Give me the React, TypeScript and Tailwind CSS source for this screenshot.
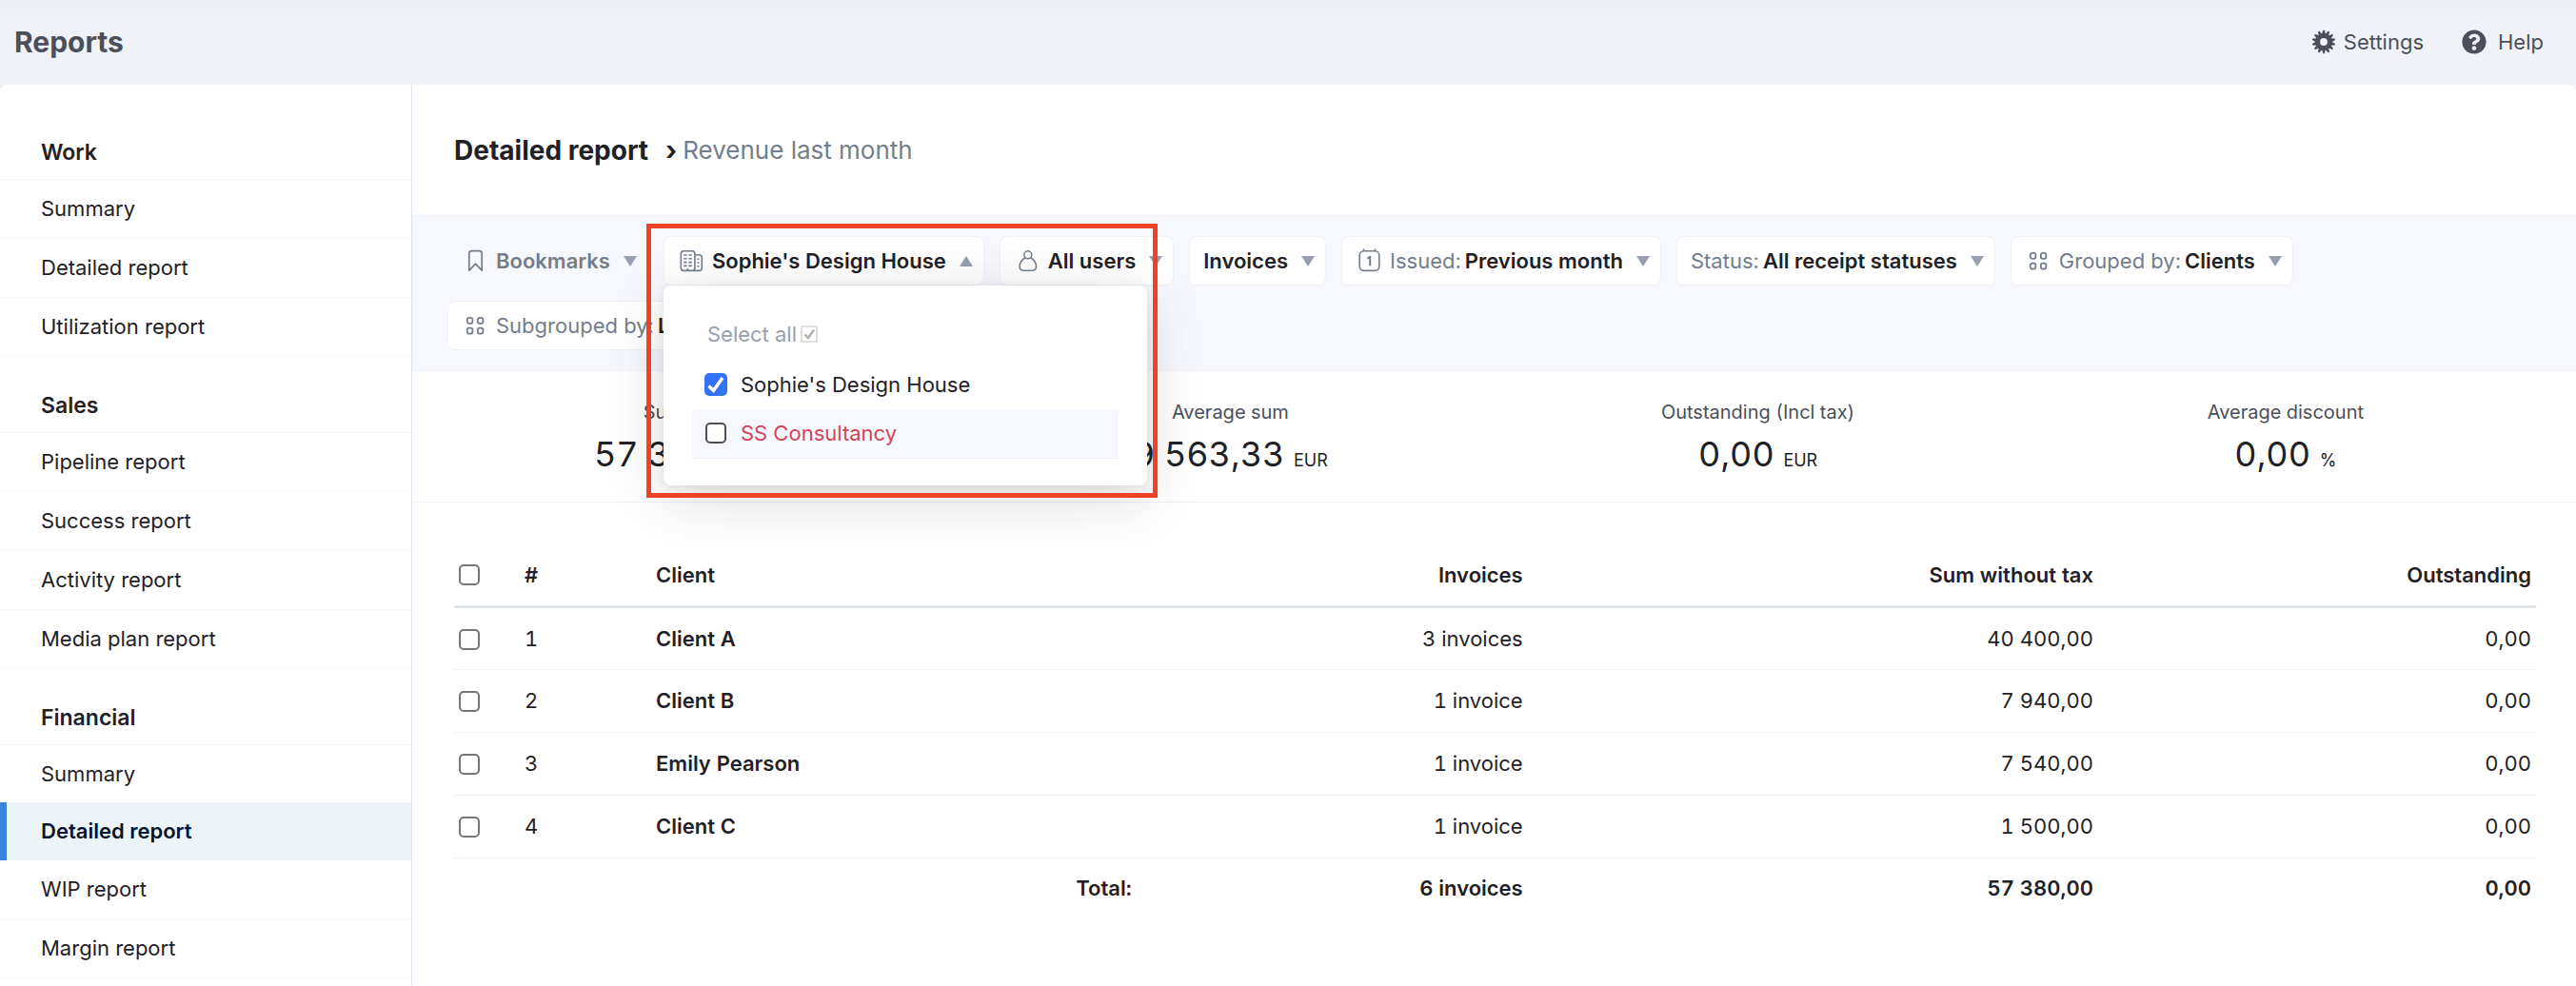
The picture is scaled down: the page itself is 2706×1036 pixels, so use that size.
import React, { useState } from 'react';
import { FaQuestionCircle } from 'react-icons/fa';

type NavGroup = { title: string; items: string[] };

const NAV: NavGroup[] = [
  { title: 'Work', items: ['Summary', 'Detailed report', 'Utilization report'] },
  { title: 'Sales', items: ['Pipeline report', 'Success report', 'Activity report', 'Media plan report'] },
  { title: 'Financial', items: ['Summary', 'Detailed report', 'WIP report', 'Margin report'] },
];

const STATS = [
  { label: 'Sum (ex. tax)', value: '57 380,00', unit: 'EUR' },
  { label: 'Average sum', value: '9 563,33', unit: 'EUR' },
  { label: 'Outstanding (Incl tax)', value: '0,00', unit: 'EUR' },
  { label: 'Average discount', value: '0,00', unit: '%' },
];

const ROWS = [
  { client: 'Client A', invoices: '3 invoices', sum: '40 400,00', outstanding: '0,00' },
  { client: 'Client B', invoices: '1 invoice', sum: '7 940,00', outstanding: '0,00' },
  { client: 'Emily Pearson', invoices: '1 invoice', sum: '7 540,00', outstanding: '0,00' },
  { client: 'Client C', invoices: '1 invoice', sum: '1 500,00', outstanding: '0,00' },
];

const CHECKBOX =
  'block size-[22px] shrink-0 appearance-none rounded-[5px] border-2 border-[#767676] bg-white checked:border-[#3273f6] checked:bg-[#3273f6]';

function GearIcon() {
  const teeth = Array.from({ length: 14 }, (_, i) => (i * 360) / 14);
  return (
    <svg viewBox="0 0 26 26" className="size-[26px]" fill="#4a4f5a" aria-hidden="true">
      {teeth.map((deg) => (
        <path key={deg} d="M10.9 5.5 12.1 1.2Q13 -.1 13.9 1.2L15.1 5.5Z" transform={`rotate(${deg} 13 13)`} />
      ))}
      <path
        fillRule="evenodd"
        d="M13 4.4a8.6 8.6 0 1 0 0 17.2 8.6 8.6 0 0 0 0-17.2Zm0 4.7a3.9 3.9 0 1 1 0 7.8 3.9 3.9 0 0 1 0-7.8Z"
      />
    </svg>
  );
}

function BookmarkIcon() {
  return (
    <svg viewBox="0 0 28 28" className="size-7" fill="none" stroke="#747d8c" strokeWidth="1.7" aria-hidden="true">
      <path d="M7.8 24.2V6.4a2.8 2.8 0 0 1 2.8-2.8h7.8a2.8 2.8 0 0 1 2.8 2.8v17.8l-6.7-7z" strokeLinejoin="round" />
    </svg>
  );
}

function BuildingIcon() {
  return (
    <svg viewBox="0 0 28 28" className="size-7" fill="none" stroke="#747d8c" strokeWidth="1.6" aria-hidden="true">
      <rect x="3.3" y="3.8" width="14.6" height="20.6" rx="2.8" />
      <path d="M18 7.8h4.6a2.7 2.7 0 0 1 2.7 2.7v11.2a2.7 2.7 0 0 1-2.7 2.7h-6.2" />
      <path d="M6.2 8h3.4M11.4 8h3.4M6.2 11.8h3.4M11.4 11.8h3.4M6.2 15.6h3.4M11.4 15.6h3.4M6.2 19.4h3.4M11.4 19.4h3.4" />
      <path d="M10.5 22v2M20.4 12.2h2M20.4 16h2M20.4 19.8h2" />
    </svg>
  );
}

function UserIcon() {
  return (
    <svg viewBox="0 0 28 28" className="size-7" fill="none" stroke="#747d8c" strokeWidth="1.6" aria-hidden="true">
      <circle cx="14.8" cy="7.8" r="4" />
      <path d="M12 10.8c-3.6 2.2-5.9 5.8-5.9 9.2 0 2.9 1.7 4.3 4.3 4.3h8.8c2.6 0 4.3-1.4 4.3-4.3 0-3.4-2.3-7-5.9-9.2" />
    </svg>
  );
}

function CalendarIcon() {
  return (
    <svg viewBox="0 0 28 28" className="size-7" fill="none" stroke="#747d8c" strokeWidth="1.6" aria-hidden="true">
      <rect x="4.2" y="3.8" width="20.6" height="20.6" rx="4.5" />
      <path d="M8.5 1.5v2.3M20.5 1.5v2.3" />
      <path d="M12.4 11.7l2.8-2v9.5" strokeWidth="2" strokeLinejoin="round" />
    </svg>
  );
}

function GroupIcon() {
  return (
    <svg viewBox="0 0 28 28" className="size-7" fill="none" stroke="#747d8c" strokeWidth="1.8" aria-hidden="true">
      <rect x="5.8" y="5.8" width="5.6" height="6" rx="2" />
      <rect x="16.8" y="5.8" width="5.6" height="6" rx="2" />
      <rect x="5.8" y="16.6" width="5.6" height="6" rx="2" />
      <rect x="16.8" y="16.6" width="5.6" height="6" rx="2" />
    </svg>
  );
}

type FilterProps = {
  icon?: React.ReactNode;
  label?: string;
  value?: string;
  open?: boolean;
  plain?: boolean;
  onClick?: () => void;
};

function Filter({ icon, label, value, open, plain, onClick }: FilterProps) {
  return (
    <button
      type="button"
      aria-expanded={open}
      onClick={onClick}
      className={`flex h-[52px] items-center whitespace-nowrap rounded-lg border pl-3.5 pr-[11px] text-[22px] leading-7 ${
        plain ? 'border-transparent' : 'border-[#eff1f8] bg-white'
      }`}
    >
      {icon && <span className="mr-2">{icon}</span>}
      {label && <span className={plain ? 'font-semibold text-[#747d8c]' : 'mr-1 text-[#747d8c]'}>{label}</span>}
      {value && <span className="font-semibold text-[#1f2126]">{value}</span>}
      <svg viewBox="0 0 14 11" className="ml-3.5 h-[11px] w-3.5" fill="#98a0af" aria-hidden="true">
        <path d={open ? 'M0 11 7 0l7 11z' : 'M0 0h14L7 11z'} />
      </svg>
    </button>
  );
}

function CheckMark() {
  return (
    <svg
      viewBox="0 0 24 24"
      className="pointer-events-none absolute inset-0 size-6"
      fill="none"
      stroke="#fff"
      strokeWidth="3.4"
      aria-hidden="true"
    >
      <path d="M4.5 13.5 9.5 18.3 19 5" />
    </svg>
  );
}

function CompanyMenu() {
  const [sophie, setSophie] = useState(true);
  const [consultancy, setConsultancy] = useState(false);

  return (
    <div className="absolute left-0 top-full z-10 w-[508px] rounded-lg bg-white px-[30px] pb-7 pt-[34px] text-[22px] leading-7 shadow-[0_12px_60px_rgba(0,0,0,0.16),0_2px_10px_rgba(0,0,0,0.06)]">
      <label className="mb-2.5 ml-4 flex h-[34px] items-center gap-1 text-[#98a0af]">
        Select all
        <span className="relative">
          <input type="checkbox" checked disabled readOnly className="block size-[18px] appearance-none border-2 border-[#dedede] bg-white" />
          <svg viewBox="0 0 18 18" className="absolute inset-0 size-[18px]" fill="none" stroke="#b0b0b0" strokeWidth="2.5" aria-hidden="true">
            <path d="M4.5 9.5 8 13l6-8.5" />
          </svg>
        </span>
      </label>
      <label className="flex h-[52px] items-center gap-3.5 pl-[13px] text-[#1f2126]">
        <span className="relative">
          <input
            type="checkbox"
            checked={sophie}
            onChange={(e) => setSophie(e.target.checked)}
            className="block size-6 appearance-none rounded-[5px] border-2 border-[#4f4f4f] bg-white checked:border-[#3273f6] checked:bg-[#3273f6]"
          />
          {sophie && <CheckMark />}
        </span>
        Sophie's Design House
      </label>
      <label className="flex h-[52px] items-center gap-[15px] border-b border-[#eff1f8] bg-[#f7f8fd] pb-0.5 pl-3.5 text-[#d2455b]">
        <input
          type="checkbox"
          checked={consultancy}
          onChange={(e) => setConsultancy(e.target.checked)}
          className="block size-[22px] appearance-none rounded-[5px] border-2 border-[#4f4f4f] bg-white checked:bg-[#3273f6]"
        />
        SS Consultancy
      </label>
    </div>
  );
}

function Sidebar() {
  return (
    <nav className="w-[433px] shrink-0 border-r border-[#e2e5ef] pt-5">
      {NAV.map((group) => (
        <section key={group.title}>
          <h2 className="flex h-20 items-end border-b border-[#f1f2f6] pb-3.5 pl-[43px] text-[23px] font-semibold leading-7">
            {group.title}
          </h2>
          {group.items.map((item) => {
            const active = group.title === 'Financial' && item === 'Detailed report';
            return (
              <a
                key={item}
                href="#"
                className={`flex items-center pb-0.5 text-[22px] leading-7 ${
                  active
                    ? '-mt-0.5 h-[61px] border-l-[7px] border-[#3b82d9] bg-[#edf4f8] pl-9 font-semibold text-[#04142b]'
                    : 'h-[62px] border-b border-[#f7f8fa] pl-[43px]'
                }`}
              >
                {item}
              </a>
            );
          })}
        </section>
      ))}
    </nav>
  );
}

function ReportTable() {
  return (
    <table className="w-full table-fixed text-[22px] leading-7 tabular-nums">
      <thead>
        <tr className="h-[72px] border-b-[3px] border-[#e2e6ef] text-right">
          <th scope="col" className="w-[69px] px-[5px] pt-2">
            <input type="checkbox" aria-label="Select all rows" className={CHECKBOX} />
          </th>
          <th scope="col" className="w-[138px] px-[5px] pt-2 text-left font-semibold">#</th>
          <th scope="col" className="w-[23.3%] px-[5px] pt-2 text-left font-semibold">Client</th>
          <th scope="col" className="w-[18.8%] px-[5px] pt-2 font-semibold">Invoices</th>
          <th scope="col" className="w-[27.4%] px-[5px] pt-2 font-semibold">Sum without tax</th>
          <th scope="col" className="px-[5px] pt-2 font-semibold">Outstanding</th>
        </tr>
      </thead>
      <tbody>
        {ROWS.map((row, i) => (
          <tr key={row.client} className="h-[66px] border-b border-[#eff1f5] text-right">
            <td className="px-[5px] pt-0.5">
              <input type="checkbox" aria-label={`Select ${row.client}`} className={CHECKBOX} />
            </td>
            <td className="px-[5px] text-left">{i + 1}</td>
            <td className="px-[5px] text-left font-semibold">{row.client}</td>
            <td className="px-[5px]">{row.invoices}</td>
            <td className="px-[5px]">{row.sum}</td>
            <td className="px-[5px]">{row.outstanding}</td>
          </tr>
        ))}
      </tbody>
      <tfoot>
        <tr className="h-16 text-right font-semibold">
          <td colSpan={3} className="px-[5px]">Total:</td>
          <td className="px-[5px]">6 invoices</td>
          <td className="px-[5px]">57 380,00</td>
          <td className="px-[5px]">0,00</td>
        </tr>
      </tfoot>
    </table>
  );
}

export default function App() {
  const [menuOpen, setMenuOpen] = useState(true);

  return (
    <div className="flex min-h-screen flex-col bg-[#f1f2f8] font-['Inter',sans-serif] text-[#1f2126]">
      <header className="flex h-[89px] shrink-0 items-center justify-between bg-linear-to-b from-[#edeef3] to-[#f1f2f8] to-30% pb-0.5 pl-[15px] pr-[34px] text-[#4a4f5a]">
        <h1 className="text-[30px] font-bold leading-9">Reports</h1>
        <div className="flex items-center gap-10 text-[22px] leading-7">
          <button type="button" className="flex items-center gap-2">
            <GearIcon />
            Settings
          </button>
          <button type="button" className="flex items-center gap-3">
            <FaQuestionCircle className="size-[26px]" />
            Help
          </button>
        </div>
      </header>

      <div className="flex grow rounded-t-lg bg-white">
        <Sidebar />

        <main className="min-w-0 grow">
          <div className="flex h-[137px] items-center pl-11">
            <h2 className="text-[28px] font-bold leading-9">Detailed report</h2>
            <span className="ml-[18px] text-[28px] font-bold leading-9">›</span>
            <span className="ml-1.5 text-[26px] leading-9 text-[#747d8c]">Revenue last month</span>
          </div>

          {/* Filters */}
          <div className="flex flex-wrap gap-4 border-y border-[#eff1f8] bg-[#f7f8fd] px-[37px] py-[21px]">
            <Filter plain icon={<BookmarkIcon />} label="Bookmarks" />
            <div className="relative">
              <Filter
                icon={<BuildingIcon />}
                value="Sophie's Design House"
                open={menuOpen}
                onClick={() => setMenuOpen(!menuOpen)}
              />
              {menuOpen && <CompanyMenu />}
              <div className="pointer-events-none absolute -left-[18px] -top-[13px] z-20 h-[288px] w-[537px] border-[5px] border-[#ee4226]" />
            </div>
            <Filter icon={<UserIcon />} value="All users" />
            <Filter value="Invoices" />
            <Filter icon={<CalendarIcon />} label="Issued:" value="Previous month" />
            <Filter label="Status:" value="All receipt statuses" />
            <Filter icon={<GroupIcon />} label="Grouped by:" value="Clients" />
            <Filter icon={<GroupIcon />} label="Subgrouped by:" value="Labels" />
          </div>

          {/* Totals */}
          <dl className="grid grid-cols-4 border-b border-[#eff1f5] px-7 pb-7 pt-[29px] text-center tabular-nums">
            {STATS.map((stat) => (
              <div key={stat.label}>
                <dt className="text-xl leading-7 text-[#4a4f5a]">{stat.label}</dt>
                <dd className="mt-2 text-4xl leading-11">
                  {stat.value} <span className="text-lg">{stat.unit}</span>
                </dd>
              </div>
            ))}
          </dl>

          <div className="pb-12 pl-11 pr-[42px] pt-[37px]">
            <ReportTable />
          </div>
        </main>
      </div>
    </div>
  );
}
